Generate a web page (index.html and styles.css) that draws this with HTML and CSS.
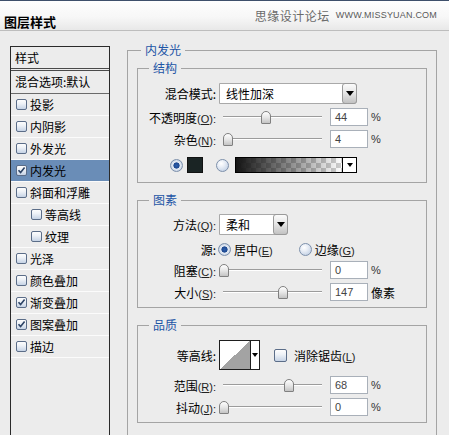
FILE: index.html
```html
<!DOCTYPE html>
<html lang="zh-CN">
<head>
<meta charset="utf-8">
<title>图层样式</title>
<link rel="stylesheet" href="styles.css">
</head>
<body>
<div class="titlebar">
  <div class="title">图层样式</div>
  <div class="watermark"><span class="wm-cn">思缘设计论坛</span><span class="wm-en">WWW.MISSYUAN.COM</span></div>
</div>
<div class="main">
  <div class="stylelist">
    <div class="sl-head">样式</div>
    <div class="sl-blend">混合选项:默认</div>
    <div class="sl-item"><span class="cb"></span>投影</div>
    <div class="sl-item"><span class="cb"></span>内阴影</div>
    <div class="sl-item"><span class="cb"></span>外发光</div>
    <div class="sl-item active"><span class="cb on"><svg viewBox="0 0 9 9" width="9" height="9"><path d="M1.5 4.2 L3.6 6.6 L7.6 1.6" fill="none" stroke="#2d4466" stroke-width="1.6"/></svg></span>内发光</div>
    <div class="sl-item"><span class="cb"></span>斜面和浮雕</div>
    <div class="sl-item sub"><span class="cb"></span>等高线</div>
    <div class="sl-item sub"><span class="cb"></span>纹理</div>
    <div class="sl-item"><span class="cb"></span>光泽</div>
    <div class="sl-item"><span class="cb"></span>颜色叠加</div>
    <div class="sl-item"><span class="cb on"><svg viewBox="0 0 9 9" width="9" height="9"><path d="M1.5 4.2 L3.6 6.6 L7.6 1.6" fill="none" stroke="#2d4466" stroke-width="1.6"/></svg></span>渐变叠加</div>
    <div class="sl-item"><span class="cb on"><svg viewBox="0 0 9 9" width="9" height="9"><path d="M1.5 4.2 L3.6 6.6 L7.6 1.6" fill="none" stroke="#2d4466" stroke-width="1.6"/></svg></span>图案叠加</div>
    <div class="sl-item"><span class="cb"></span>描边</div>
  </div>

  <fieldset class="outer">
    <legend>内发光</legend>

    <fieldset class="group g-struct">
      <legend>结构</legend>
      <div class="row r-select">
        <span class="lbl">混合模式:</span>
        <div class="select wide"><span class="select-text">线性加深</span><span class="select-btn"><span class="tri"></span></span></div>
      </div>
      <div class="row r-slider">
        <span class="lbl">不透明度<span class="lat">(<u>O</u>):</span></span>
        <div class="slider"><span class="thumb" style="--p:44"></span></div>
        <div class="num">44</div><span class="unit">%</span>
      </div>
      <div class="row r-slider">
        <span class="lbl">杂色<span class="lat">(<u>N</u>):</span></span>
        <div class="slider"><span class="thumb" style="--p:4"></span></div>
        <div class="num">4</div><span class="unit">%</span>
      </div>
      <div class="row r-color">
        <span class="radio on"></span>
        <span class="swatch"></span>
        <span class="radio"></span>
        <div class="gradpick"><span class="grad"></span><span class="gp-btn"><span class="tri small"></span></span></div>
      </div>
    </fieldset>

    <fieldset class="group g-elem">
      <legend>图素</legend>
      <div class="row r-select">
        <span class="lbl">方法<span class="lat">(<u>Q</u>):</span></span>
        <div class="select narrow"><span class="select-text">柔和</span><span class="select-btn"><span class="tri"></span></span></div>
      </div>
      <div class="row r-source">
        <span class="lbl">源:</span>
        <span class="radio on"></span><span class="opt">居中<span class="lat">(<u>E</u>)</span></span>
        <span class="radio r2"></span><span class="opt">边缘<span class="lat">(<u>G</u>)</span></span>
      </div>
      <div class="row r-slider">
        <span class="lbl">阻塞<span class="lat">(<u>C</u>):</span></span>
        <div class="slider"><span class="thumb" style="--p:0"></span></div>
        <div class="num">0</div><span class="unit">%</span>
      </div>
      <div class="row r-slider">
        <span class="lbl">大小<span class="lat">(<u>S</u>):</span></span>
        <div class="slider"><span class="thumb" style="--p:61"></span></div>
        <div class="num">147</div><span class="unit cjk">像素</span>
      </div>
    </fieldset>

    <fieldset class="group g-quality">
      <legend>品质</legend>
      <div class="row r-contour">
        <span class="lbl">等高线:</span>
        <div class="contour"><span class="contour-preview"></span><span class="contour-btn"><span class="tri small"></span></span></div>
        <span class="cb big"></span><span class="opt">消除锯齿<span class="lat">(<u>L</u>)</span></span>
      </div>
      <div class="row r-slider">
        <span class="lbl">范围<span class="lat">(<u>R</u>):</span></span>
        <div class="slider"><span class="thumb" style="--p:68"></span></div>
        <div class="num">68</div><span class="unit">%</span>
      </div>
      <div class="row r-slider">
        <span class="lbl">抖动<span class="lat">(<u>J</u>):</span></span>
        <div class="slider"><span class="thumb" style="--p:0"></span></div>
        <div class="num">0</div><span class="unit">%</span>
      </div>
    </fieldset>
  </fieldset>
</div>
</body>
</html>
```
FILE: styles.css
```css
* { box-sizing: border-box; }
html, body { margin: 0; padding: 0; }
body {
  width: 449px;
  height: 435px;
  overflow: hidden;
  background: #ececec;
  font-family: "Noto Sans CJK SC", "Liberation Sans", sans-serif;
  font-size: 12px;
  color: #000;
}

/* title bar */
.titlebar {
  height: 31px;
  border-top: 1px solid #3e506b;
  border-bottom: 1px solid #bdbdbd;
  background: linear-gradient(#fefefe, #f7f7f7 55%, #e8e8e8);
  display: flex;
}
.title {
  padding: 13px 0 0 4px;
  font-size: 13px;
  line-height: 16px;
  font-weight: bold;
}
.watermark {
  margin-left: auto;
  padding: 6px 12px 0 0;
  display: flex;
  align-items: center;
  height: 22px;
  color: #6a6a6a;
}
.wm-cn { font-size: 12px; letter-spacing: 0.5px; }
.wm-en {
  margin-left: 6px;
  font-family: "Liberation Sans", sans-serif;
  font-size: 9px;
  letter-spacing: 0.2px;
  color: #5a5a5a;
}

/* main area */
.main {
  display: flex;
  align-items: flex-start;
  height: 404px;
  padding-left: 10px;
  overflow: hidden;
}

/* style list */
.stylelist {
  flex: none;
  width: 100px;
  height: 389px;
  margin-top: 15px;
  border: 1px solid #2a2a2a;
  border-bottom: none;
  background: #ececec;
}
.sl-head {
  height: 22px;
  line-height: 21px;
  padding-left: 4px;
  border-bottom: 1px solid #4a4a4a;
}
.sl-blend {
  margin-top: 1px;
  height: 24px;
  line-height: 22px;
  padding-left: 4px;
  border-top: 1px solid #4a4a4a;
  border-bottom: 1px solid #6a6a6a;
}
.sl-item {
  height: 22px;
  display: flex;
  align-items: center;
  padding-left: 5px;
  border-bottom: 1px solid #fbfbfb;
}
.sl-item.sub { padding-left: 20px; }
.sl-item.active { background: #6a8db7; }

.cb {
  flex: none;
  width: 11px;
  height: 11px;
  margin-right: 3px;
  border: 1px solid #5b6d88;
  border-radius: 2px;
  background: linear-gradient(#fdfdfd, #eef2f7 40%, #c6d3e5);
  display: flex;
  align-items: center;
  justify-content: center;
}
.cb svg { display: block; }
.cb.big { width: 13px; height: 13px; margin-left: 14px; margin-right: 4px; }

/* settings */
fieldset {
  margin: 0;
  min-width: 0;
  border: 1px solid #a4a4a4;
}
legend {
  padding: 0 4px;
  color: #1d55a6;
  font-size: 12px;
  line-height: 14px;
}
.outer {
  flex: none;
  width: 310px;
  height: 420px;
  margin: 12px 0 0 17px;
  padding: 4px 9px 0 9px;
}
.outer > legend { margin-left: 4px; }
.group { padding: 8px 0 9px 0; }
.group > legend { margin-left: 11px; }
.g-elem { margin-top: 10px; padding: 7px 0 4px 0; }
.g-quality { margin-top: 10px; padding: 8px 0 4px 0; }

.row { display: flex; align-items: center; }
.lbl {
  flex: none;
  width: 78px;
  text-align: right;
  white-space: nowrap;
}
.lat {
  font-family: "Liberation Sans", sans-serif;
  font-size: 11px;
  color: #222;
}
.lat u { text-decoration-thickness: 1px; text-underline-offset: 1px; }

.r-select { height: 21px; }
.g-struct .r-select { margin-bottom: 2px; }
.r-slider { height: 22px; }

.select {
  margin-left: 3px;
  height: 21px;
  display: flex;
  background: #fff;
  border: 1px solid #a9a9a9;
  border-radius: 0 3px 3px 0;
}
.select.wide { width: 138px; }
.select.narrow { width: 69px; }
.select-text { padding-left: 6px; line-height: 19px; }
.select-btn {
  margin-left: auto;
  width: 15px;
  height: 21px;
  margin-top: -1px;
  margin-right: -1px;
  border: 1px solid #9a9a9a;
  border-radius: 3px;
  background: linear-gradient(#fbfbfb, #e4e4e4 50%, #c2c2c2);
  display: flex;
  align-items: center;
  justify-content: center;
}
.tri {
  width: 0;
  height: 0;
  border-left: 4px solid transparent;
  border-right: 4px solid transparent;
  border-top: 5px solid #000;
}
.tri.small {
  border-left-width: 3px;
  border-right-width: 3px;
  border-top-width: 4px;
}

.slider {
  position: relative;
  flex: none;
  margin-left: 3px;
  width: 107px;
  height: 22px;
  background:
    linear-gradient(#9c9c9c, #9c9c9c) no-repeat 4px 10px / 99px 1px,
    linear-gradient(#ffffff, #ffffff) no-repeat 4px 11px / 99px 1px;
}
.thumb {
  position: absolute;
  top: 5px;
  left: calc(var(--p) * 0.96px);
  width: 10px;
  height: 13px;
  border: 1px solid #808080;
  border-radius: 5px 5px 1px 1px;
  background: linear-gradient(#ffffff, #e6e6e6 50%, #c4c4c4);
}
.num {
  flex: none;
  margin-left: 4px;
  width: 38px;
  height: 18px;
  border: 1px solid #a9b0b9;
  background: #fff;
  padding-left: 4px;
  font-family: "Liberation Sans", sans-serif;
  font-size: 11px;
  line-height: 16px;
  color: #444;
}
.unit {
  margin-left: 3px;
  font-family: "Liberation Sans", sans-serif;
  font-size: 11px;
  color: #333;
}
.unit.cjk { font-family: "Noto Sans CJK SC", sans-serif; font-size: 12px; color: #000; }

.r-color { height: 16px; margin-top: 7px; padding-left: 32px; }
.radio {
  flex: none;
  width: 13px;
  height: 13px;
  border-radius: 50%;
  border: 1px solid #7d90ab;
  background: radial-gradient(circle at 38% 32%, #ffffff 0, #e9eef6 35%, #b5c6de 100%);
}
.radio.on {
  background: radial-gradient(circle, #2d5fae 0, #1c478f 2.8px, #e8edf5 3.4px, #d2dcea 5px, #aebfd8 6px);
}
.swatch {
  flex: none;
  width: 16px;
  height: 16px;
  margin: 0 13px 0 4px;
  background: #1a2424;
  border: 1px solid #111;
}
.gradpick {
  margin-left: 6px;
  width: 122px;
  height: 16px;
  border: 1px solid #000;
  display: flex;
  background: #fff;
}
.grad {
  flex: 1;
  background:
    linear-gradient(to right, #141414, rgba(20,20,20,0)),
    repeating-conic-gradient(#cfcfcf 0 25%, #ffffff 0 50%) 0 0 / 10px 10px;
}
.gp-btn {
  width: 14px;
  border-left: 1px solid #000;
  display: flex;
  align-items: center;
  justify-content: center;
}

.r-source { height: 20px; margin-top: 4px; }
.r-source .radio { margin-left: 2px; }
.r-source .radio.r2 { margin-left: 26px; }
.opt { margin-left: 3px; }

.r-contour { height: 30px; margin-bottom: 4px; }
.contour {
  flex: none;
  margin-left: 3px;
  width: 41px;
  height: 30px;
  border: 1px solid #1e1e1e;
  background: #fff;
  display: flex;
}
.contour-preview {
  width: 30px;
  background: linear-gradient(to bottom right, #ffffff 50%, #a3a3a3 50%);
}
.contour-btn {
  flex: 1;
  border-left: 1px solid #1e1e1e;
  display: flex;
  align-items: center;
  justify-content: center;
}
```
